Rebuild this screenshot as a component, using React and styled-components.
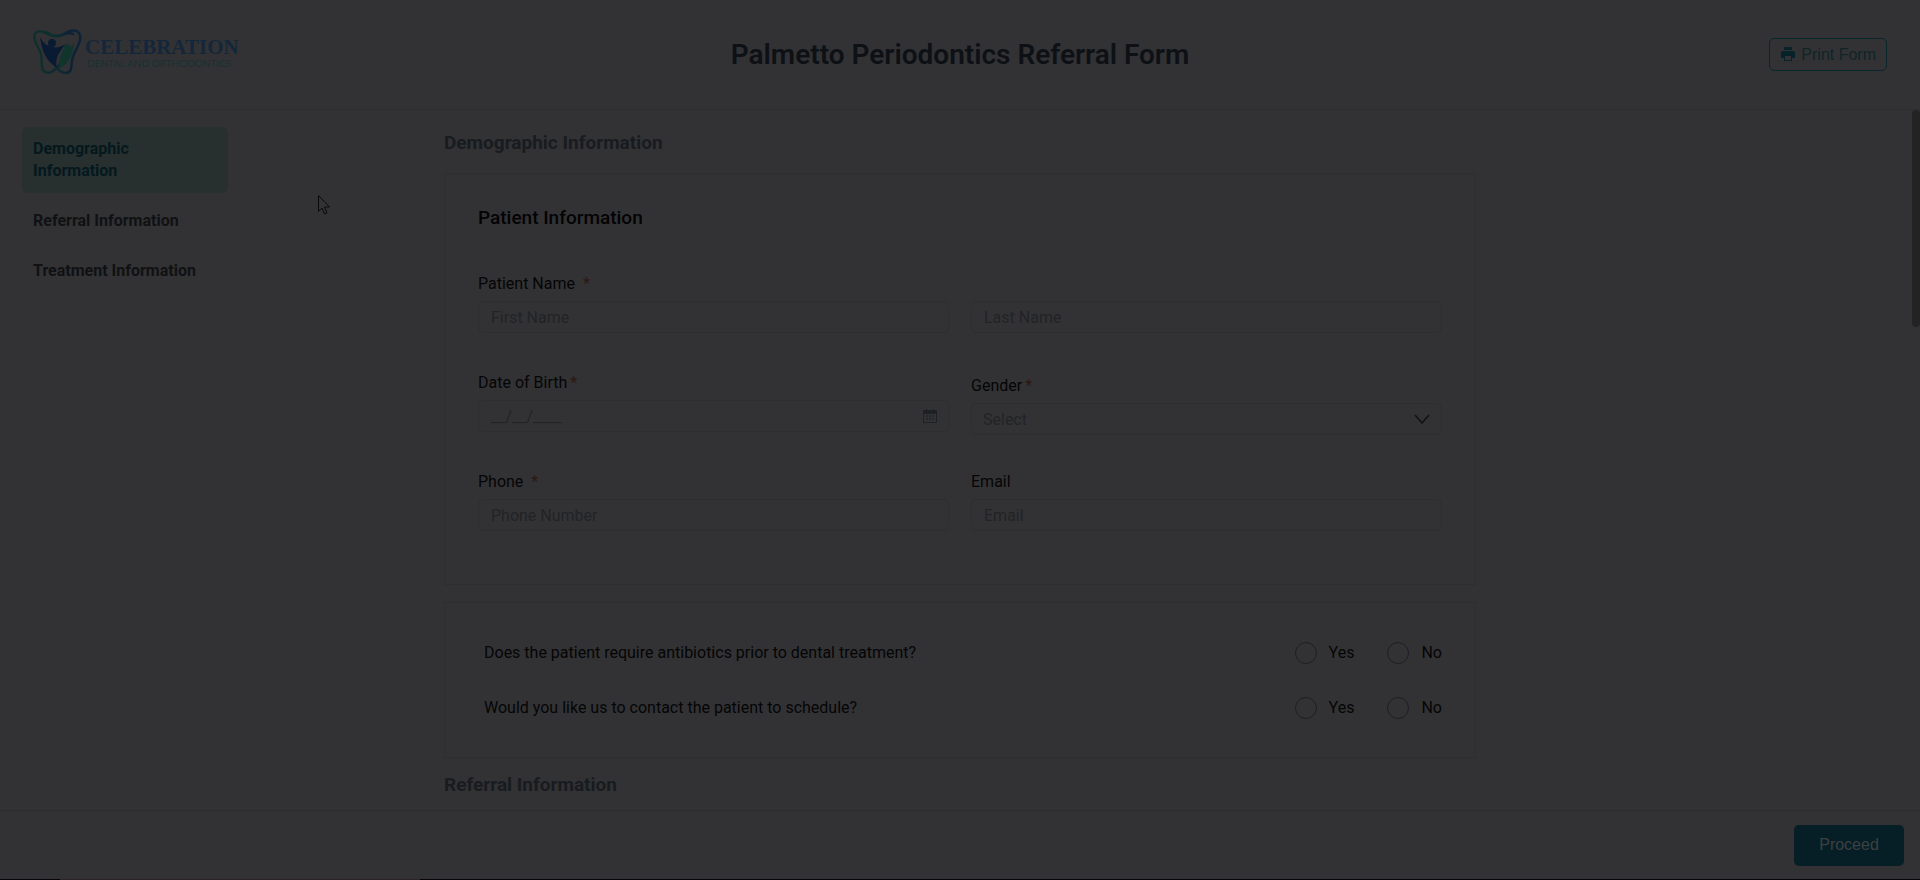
import React from 'react';
import styled, { createGlobalStyle } from 'styled-components';

const GlobalStyle = createGlobalStyle`
  * {
    box-sizing: border-box;
  }

  body {
    margin: 0;
    background: #323234;
    font-family: Roboto, sans-serif;
    font-size: 16px;
    line-height: 22px;
    color: #050506;
  }
`;

const Page = styled.div`
  position: relative;
  display: flex;
  flex-direction: column;
  height: 100vh;
  overflow: hidden;
`;

const Header = styled.header`
  display: grid;
  grid-template-columns: 1fr auto 1fr;
  align-items: center;
  height: 110px;
  flex-shrink: 0;
  padding: 0 33px;
  border-bottom: 1px solid #2d2d2f;
`;

const Brand = styled.a`
  display: flex;
  align-items: center;
  gap: 2px;
  padding-bottom: 6px;
  text-decoration: none;
`;

const BrandText = styled.span`
  display: flex;
  flex-direction: column;
`;

const BrandName = styled.span`
  font-family: 'Liberation Serif', serif;
  font-size: 21px;
  font-weight: 700;
  line-height: 22px;
  color: #14273a;
`;

const BrandTagline = styled.span`
  padding-left: 2px;
  font-family: Lato, sans-serif;
  font-size: 10px;
  line-height: 10px;
  color: #17312f;
`;

const Title = styled.h1`
  margin: 0;
  font-size: 28px;
  font-weight: 600;
  line-height: 36px;
  color: #0d1116;
`;

const PrintButton = styled.button`
  display: flex;
  align-items: center;
  justify-self: end;
  gap: 5px;
  height: 33px;
  padding: 0 10px;
  border: 1px solid #08262c;
  border-radius: 5px;
  background: transparent;
  font-family: 'Liberation Sans', Arial, sans-serif;
  font-size: 16px;
  color: #0f2428;
`;

const Body = styled.div`
  display: grid;
  grid-template-columns: 228px minmax(0, 1032px) 228px;
  justify-content: space-between;
  flex: 1;
  min-height: 0;
  overflow: hidden;
`;

const SideNav = styled.nav`
  display: flex;
  flex-direction: column;
  gap: 6px;
  padding: 17px 0 0 22px;
`;

const NavLink = styled.a`
  padding: 11px;
  border-radius: 6px;
  background: ${({ $active }) => ($active ? '#27302e' : 'transparent')};
  font-weight: 700;
  text-decoration: none;
  color: ${({ $active }) => ($active ? '#04181e' : '#101113')};
`;

const Form = styled.form`
  display: flex;
  flex-direction: column;
  padding-top: 6px;
`;

const SectionTitle = styled.h2`
  margin: 0;
  padding: 14px 0 17px;
  font-size: 19px;
  font-weight: 700;
  line-height: 26px;
  color: #181b1f;
`;

const Card = styled.section`
  padding: ${({ $compact }) => ($compact ? '22px 33px' : '30px 33px 53px')};
  border: 1px solid #2e2e30;

  & + & {
    margin-top: 17px;
  }
`;

const CardTitle = styled.h3`
  margin: 0 0 41px;
  font-size: 19px;
  font-weight: 500;
  line-height: 28px;
  color: #030304;
`;

const Fields = styled.div`
  display: grid;
  grid-template-columns: 1fr 1fr;
  gap: 39px 22px;
`;

const Field = styled.div`
  display: flex;
  flex-direction: column;
  justify-content: flex-end;
  gap: 6px;
  height: 60px;
`;

const SelectField = styled(Field)`
  margin: 3px 0 -3px;
`;

const Label = styled.label`
  line-height: 22px;
`;

const Required = styled.span`
  margin-left: ${({ $wide }) => ($wide ? '8px' : '3px')};
  color: #2e1712;
`;

const control = `
  width: 100%;
  height: 32px;
  padding: 0 12px;
  border: 1px solid #2d2e30;
  border-radius: 5px;
  background: transparent;
  font-family: Roboto, sans-serif;
  font-size: 16px;
  color: #222325;
  outline: none;
`;

const Input = styled.input`
  ${control}

  &::placeholder {
    color: #222325;
    opacity: 1;
  }
`;

const Select = styled.select`
  ${control}
  padding: 0 11px;
  appearance: none;
`;

const ControlWrap = styled.div`
  position: relative;
  display: flex;
`;

const ControlIcon = styled.svg`
  position: absolute;
  top: 0;
  bottom: 0;
  right: 12px;
  margin: auto 0;
  pointer-events: none;
`;

const Question = styled.fieldset`
  display: flex;
  align-items: center;
  justify-content: space-between;
  height: 55px;
  margin: 0;
  padding: 0 0 0 6px;
  border: 0;
`;

const Options = styled.div`
  display: flex;
  gap: 33px;
`;

const Option = styled.label`
  display: flex;
  align-items: center;
  gap: 12px;
`;

const Radio = styled.input`
  appearance: none;
  width: 22px;
  height: 22px;
  margin: 0;
  border: 1px solid #1e1f21;
  border-radius: 50%;
`;

const Footer = styled.footer`
  display: flex;
  align-items: center;
  justify-content: flex-end;
  height: 69px;
  flex-shrink: 0;
  padding: 0 16px;
  border-top: 1px solid #2c2c2e;
`;

const ProceedButton = styled.button`
  width: 110px;
  height: 41px;
  border: 0;
  border-radius: 5px;
  background: #061f26;
  font-family: 'Liberation Sans', Arial, sans-serif;
  font-size: 16px;
  color: #3d4042;
`;

const BottomEdge = styled.div`
  height: 1px;
  flex-shrink: 0;
  background: linear-gradient(
    to right,
    #08040a 60px,
    #2a2224 60px,
    #2a2224 420px,
    #08040a 420px
  );
`;

const ScrollThumb = styled.div`
  position: absolute;
  top: 110px;
  right: 0;
  width: 8px;
  height: 217px;
  border-radius: 4px;
  background: #232324;
`;

const Cursor = styled.svg`
  position: absolute;
  top: 194px;
  left: 317px;
`;

const BrandMark = () => (
  <svg width="50" height="48" viewBox="0 0 50 48" aria-hidden="true">
    <defs>
      <linearGradient id="tooth" x1="0" x2="1">
        <stop offset="0.2" stopColor="#0e302d" />
        <stop offset="0.7" stopColor="#0e2236" />
      </linearGradient>
    </defs>
    <path
      d="M40 6C34 3 28 9 20 8 14 7 10 1 4 4c-5 3-2 11 2 17 4 7 2 12 3 18 1 6 7 7 11 4 5-3 6-7 9-10"
      fill="none"
      stroke="url(#tooth)"
      strokeWidth="2.5"
      strokeLinecap="round"
    />
    <path
      d="M14 4c6 5 11 6 17 2 5-4 12-5 15-1 4 6-2 14-5 21-3 6-2 10-3 15-2 6-10 5-15-2"
      fill="none"
      stroke="url(#tooth)"
      strokeWidth="2.5"
      strokeLinecap="round"
    />
    <path
      d="M7 9c3 6 7 9 13 10 4 1 8 0 12-3-3 6-7 9-8 14-1 4-1 7 0 10C12 32 9 23 7 9Z"
      fill="#091b33"
    />
    <circle cx="19" cy="15" r="4" fill="#091b33" />
    <path
      d="M41 15c-1 10-3 19-15 26-1-7 1-12 4-18l-3-2c6 2 11-1 14-6Z"
      fill="#10352d"
    />
    <circle cx="34" cy="19" r="3" fill="#10352d" />
  </svg>
);

const PrinterIcon = () => (
  <svg width="16" height="16" viewBox="0 0 16 16" aria-hidden="true">
    <path
      fill="#06232a"
      fillRule="evenodd"
      d="M4 0h8v3H4ZM3 4h10a2 2 0 0 1 2 2v5h-3v3H4v-3H1V6a2 2 0 0 1 2-2Zm2 5v4h6V9Z"
    />
  </svg>
);

const CalendarIcon = () => (
  <ControlIcon width="14" height="14" viewBox="0 0 14 14" aria-hidden="true">
    <path
      fill="#1e2124"
      fillRule="evenodd"
      d="M3 0h1v1h6V0h1v1h3v13H0V1h3ZM1 5v8h12V5Z"
    />
    <path
      fill="#24272a"
      d="M3 6h2v2H3Zm3 0h2v2H6Zm3 0h2v2H9ZM3 9h2v2H3Zm3 0h2v2H6Zm3 0h2v2H9Z"
    />
  </ControlIcon>
);

const ChevronIcon = () => (
  <ControlIcon width="16" height="12" viewBox="0 0 16 12" aria-hidden="true">
    <path d="m1 2 7 8 7-8" fill="none" stroke="#121315" strokeWidth="1.6" />
  </ControlIcon>
);

const sections = [
  'Demographic Information',
  'Referral Information',
  'Treatment Information',
];

const questions = [
  {
    name: 'antibiotics',
    text: 'Does the patient require antibiotics prior to dental treatment?',
  },
  {
    name: 'contact',
    text: 'Would you like us to contact the patient to schedule?',
  },
];

const App = () => {
  return (
    <>
      <GlobalStyle />
      <Page>
        <Header>
          <Brand href="#home">
            <BrandMark />
            <BrandText>
              <BrandName>CELEBRATION</BrandName>
              <BrandTagline>DENTAL AND ORTHODONTICS</BrandTagline>
            </BrandText>
          </Brand>
          <Title>Palmetto Periodontics Referral Form</Title>
          <PrintButton type="button">
            <PrinterIcon />
            Print Form
          </PrintButton>
        </Header>
        <Body>
          <SideNav>
            {sections.map((section, i) => (
              <NavLink key={section} href={`#section-${i}`} $active={i === 0}>
                {section}
              </NavLink>
            ))}
          </SideNav>
          <Form>
            <SectionTitle id="section-0">Demographic Information</SectionTitle>
            <Card>
              <CardTitle>Patient Information</CardTitle>
              <Fields>
                <Field>
                  <Label htmlFor="firstName">
                    Patient Name<Required $wide>*</Required>
                  </Label>
                  <Input id="firstName" placeholder="First Name" />
                </Field>
                <Field>
                  <Input aria-label="Last Name" placeholder="Last Name" />
                </Field>
                <Field>
                  <Label htmlFor="dob">
                    Date of Birth<Required>*</Required>
                  </Label>
                  <ControlWrap>
                    <Input id="dob" placeholder="__/__/____" />
                    <CalendarIcon />
                  </ControlWrap>
                </Field>
                <SelectField>
                  <Label htmlFor="gender">
                    Gender<Required>*</Required>
                  </Label>
                  <ControlWrap>
                    <Select id="gender">
                      <option>Select</option>
                    </Select>
                    <ChevronIcon />
                  </ControlWrap>
                </SelectField>
                <Field>
                  <Label htmlFor="phone">
                    Phone<Required $wide>*</Required>
                  </Label>
                  <Input id="phone" type="tel" placeholder="Phone Number" />
                </Field>
                <Field>
                  <Label htmlFor="email">Email</Label>
                  <Input id="email" type="email" placeholder="Email" />
                </Field>
              </Fields>
            </Card>
            <Card $compact>
              {questions.map(({ name, text }) => (
                <Question key={name} aria-label={text}>
                  <span>{text}</span>
                  <Options>
                    <Option>
                      <Radio type="radio" name={name} value="yes" />
                      Yes
                    </Option>
                    <Option>
                      <Radio type="radio" name={name} value="no" />
                      No
                    </Option>
                  </Options>
                </Question>
              ))}
            </Card>
            <SectionTitle id="section-1">Referral Information</SectionTitle>
          </Form>
        </Body>
        <Footer>
          <ProceedButton type="button">Proceed</ProceedButton>
        </Footer>
        <BottomEdge />
        <ScrollThumb />
        <Cursor width="14" height="22" viewBox="0 0 14 22" aria-hidden="true">
          <path
            d="M1.5 1.5v16l3.500-3.500 2.500 6 2.500-1-2.500-6h5Z"
            fill="#323234"
            stroke="#0a0a0b"
          />
        </Cursor>
      </Page>
    </>
  );
};

export default App;
